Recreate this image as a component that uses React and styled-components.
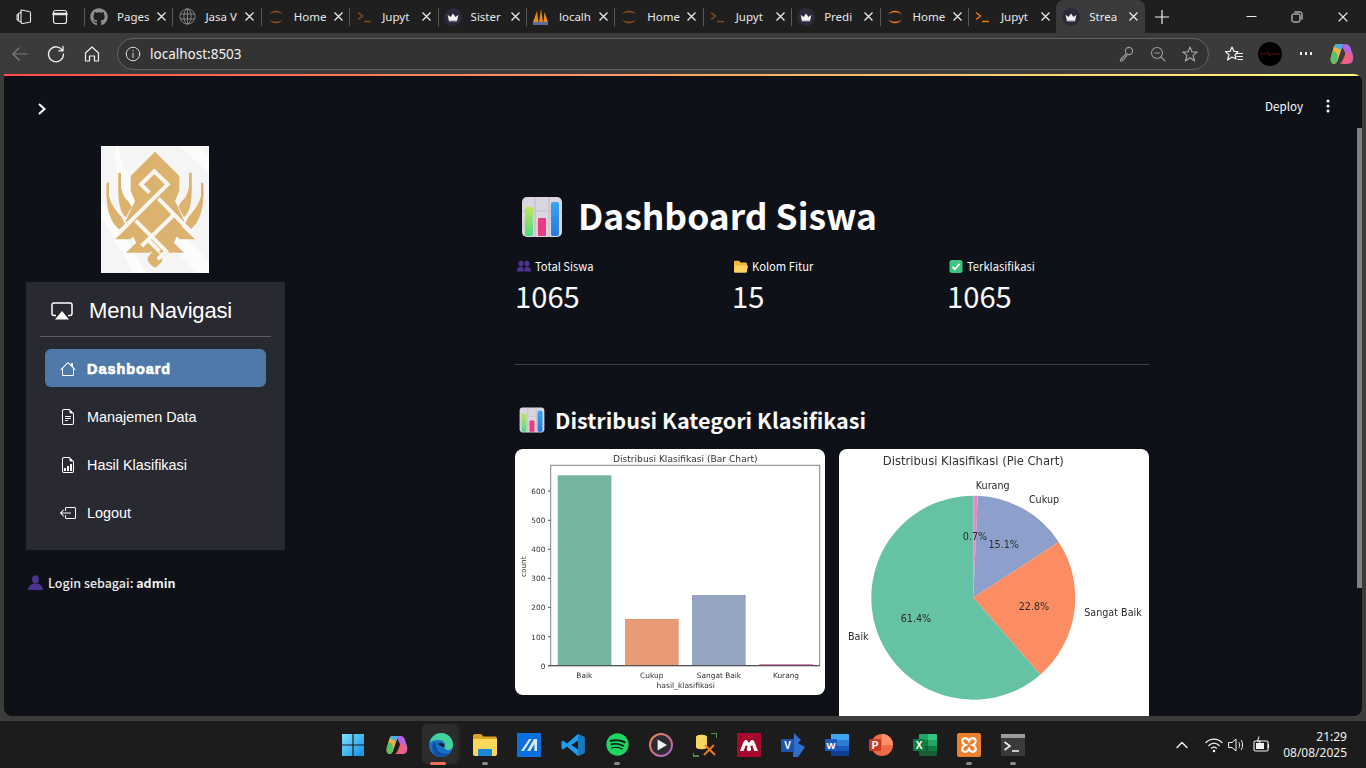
import React from 'react'
import styled, { createGlobalStyle } from 'styled-components'
import { BsHouse, BsFileEarmarkText, BsFileEarmarkBarGraph, BsBoxArrowLeft } from 'react-icons/bs'
import { FaGithub, FaSpotify } from 'react-icons/fa'

const GlobalStyle = createGlobalStyle`
    html, body {
        margin: 0;
        width: 1366px;
        height: 768px;
        overflow: hidden;
        background: #3b3b3b;
    }
    * { box-sizing: border-box; }
`

const uiFont = `"Noto Sans", "Open Sans", sans-serif`
const appFont = `"Noto Sans CJK SC", "Noto Sans", sans-serif`
const navFont = `"Liberation Sans", Arial, sans-serif`

const Window = styled.div`
    width: 1366px;
    height: 768px;
    display: flex;
    flex-direction: column;
    background: #3b3b3b;
    font-family: ${uiFont};
    color: #fff;
`

/* ---------- tab strip ---------- */
const TabStrip = styled.div`
    height: 33px;
    display: flex;
    align-items: stretch;
    background: #1f1f1f;
`
const StripIcons = styled.div`
    width: 84px;
    display: flex;
    align-items: center;
    gap: 18px;
    padding-left: 15px;
`
const Tab = styled.div`
    width: 88.4px;
    display: flex;
    align-items: center;
    padding-left: 6px;
    position: relative;
    font-size: 11.5px;
    color: #e8e8e8;
    background: ${p => p.$active ? '#3b3b3b' : 'none'};
    border-radius: ${p => p.$active ? '8px 8px 0 0' : '0'};
    &::before {
        content: '';
        display: ${p => p.$active ? 'none' : 'block'};
        position: absolute;
        left: 0;
        top: 8px;
        bottom: 7px;
        width: 1px;
        background: #5a5a5a;
    }
`
const Favicon = styled.div`
    width: 18px;
    height: 18px;
    display: flex;
    align-items: center;
    justify-content: center;
    flex: none;
`
const TabLabel = styled.div`
    width: 35px;
    margin-left: 9px;
    white-space: nowrap;
`
const TabClose = styled.div`
    margin-left: 4px;
    display: flex;
`
const NewTab = styled.div`
    width: 34px;
    display: flex;
    align-items: center;
    justify-content: center;
`
const WindowControls = styled.div`
    margin-left: auto;
    display: flex;
    align-items: center;
`
const WindowButton = styled.div`
    width: 46px;
    display: flex;
    justify-content: center;
`

/* ---------- address bar ---------- */
const Toolbar = styled.div`
    height: 41px;
    display: flex;
    align-items: flex-start;
    padding-top: 5px;
`
const NavButtons = styled.div`
    width: 117px;
    height: 32px;
    display: flex;
    align-items: center;
    gap: 16px;
    padding-left: 10px;
`
const AddressBar = styled.div`
    width: 1092px;
    height: 32px;
    display: flex;
    align-items: center;
    border: 1px solid #636363;
    border-radius: 16px;
    background: #333333;
    padding: 0 9px 0 7px;
`
const Url = styled.div`
    margin-left: 9px;
    font-size: 13.5px;
    color: #f2f2f2;
    flex: 1;
`
const AddressIcons = styled.div`
    display: flex;
    align-items: center;
    gap: 14px;
`
const ToolIcons = styled.div`
    flex: 1;
    height: 32px;
    display: flex;
    align-items: center;
    padding-left: 15px;
    gap: 14px;
`
const ProfileDot = styled.div`
    width: 24px;
    height: 24px;
    border-radius: 50%;
    background: #000;
    display: flex;
    align-items: center;
    justify-content: center;
`

/* ---------- streamlit page ---------- */
const Frame = styled.div`
    height: 642px;
    margin: 0 4px 5px;
    border-radius: 0 8px 8px 8px;
    background: #0e1117;
    overflow: hidden;
    position: relative;
    font-family: ${appFont};
`
const Decoration = styled.div`
    height: 2px;
    background: linear-gradient(90deg, #ff4b4b, #fffd80);
`
const TopBar = styled.div`
    height: 70px;
    display: flex;
    align-items: flex-start;
    padding: 22px 27px 0 32px;
`
const Chevron = styled.div`
    margin-top: 3px;
    display: flex;
`
const Deploy = styled.div`
    margin-left: auto;
    font-size: 11.6px;
    line-height: 16px;
    color: #fff;
`
const Kebab = styled.div`
    margin-left: 18px;
    display: flex;
`
const Scrollbar = styled.div`
    position: absolute;
    right: 0;
    top: 54px;
    width: 5px;
    height: 460px;
    background: #808080;
`
const Body = styled.div`
    display: flex;
    align-items: flex-start;
`
const SidePane = styled.div`
    width: 281px;
    padding-left: 22px;
    flex: none;
`
const LogoBox = styled.div`
    width: 108px;
    height: 127px;
    margin: 0 auto 9px 75px;
    display: flex;
`
const MenuCard = styled.div`
    width: 259px;
    height: 268px;
    background: #292932;
    padding: 0 14px;
`
const MenuHead = styled.div`
    height: 55px;
    display: flex;
    align-items: center;
    padding: 4px 0 0 11px;
    gap: 16px;
    border-bottom: 1px solid #5d5d66;
    font-family: ${navFont};
    font-size: 22px;
    letter-spacing: -0.2px;
    color: #fff;
`
const MenuList = styled.div`
    display: flex;
    flex-direction: column;
    gap: 10px;
    padding: 12px 5px 0;
`
const MenuItem = styled.div`
    height: 38px;
    display: flex;
    align-items: center;
    gap: 11px;
    padding: 2px 0 0 15px;
    border-radius: 6px;
    font-family: ${navFont};
    font-size: 14.4px;
    color: #fff;
    background: ${p => p.$active ? '#4f79a8' : 'none'};
    font-weight: ${p => p.$active ? 700 : 400};
    -webkit-text-stroke: ${p => p.$active ? '0.7px #fff' : '0'};
    letter-spacing: ${p => p.$active ? '1px' : '0'};
`
const LoginLine = styled.div`
    margin: 23px 0 0 2px;
    display: flex;
    align-items: center;
    gap: 5px;
    height: 18px;
    font-size: 12.5px;
    font-weight: 500;
    color: #e9e9ea;
    white-space: pre;
    b { font-weight: 700; color: #f3f3f3; }
`
const Main = styled.div`
    width: 634px;
    margin-left: 230px;
    flex: none;
`
const TitleRow = styled.div`
    height: 42px;
    margin-top: 50px;
    display: flex;
    align-items: center;
    gap: 15px;
    padding-left: 6px;
`
const Title = styled.h1`
    margin: 0;
    padding-bottom: 4px;
    font-size: 35.4px;
    line-height: 42px;
    font-weight: 700;
    color: #fff;
`
const Metrics = styled.div`
    display: grid;
    grid-template-columns: 217px 215px 200px;
    margin-top: 18px;
`
const MetricLabel = styled.div`
    height: 20px;
    display: flex;
    align-items: center;
    gap: 4px;
    padding-left: 2px;
    font-size: 11.2px;
    color: #fafafa;
`
const MetricValue = styled.div`
    font-size: 29.2px;
    line-height: 38px;
    color: #fafafa;
`
const Divider = styled.div`
    height: 1px;
    margin-top: 50px;
    background: #3b3e46;
`
const SectionRow = styled.div`
    height: 30px;
    margin: 40px 0 14px;
    display: flex;
    align-items: center;
    gap: 10px;
    padding-left: 4px;
`
const SectionTitle = styled.h2`
    margin: 0;
    font-size: 21.6px;
    line-height: 30px;
    font-weight: 700;
    color: #fafafa;
`
const Charts = styled.div`
    display: flex;
    align-items: flex-start;
    gap: 14px;
`
const ChartCard = styled.div`
    width: 310px;
    height: ${p => p.$h}px;
    border-radius: 8px;
    background: #fff;
    overflow: hidden;
    svg {
        display: block;
        font-family: "DejaVu Sans", sans-serif;
        filter: blur(0.35px);
    }
`

/* ---------- taskbar ---------- */
const Taskbar = styled.div`
    height: 47px;
    display: grid;
    grid-template-columns: 1fr auto 1fr;
    background: #1c1c1c;
`
const TaskIcons = styled.div`
    grid-column: 2;
    display: flex;
`
const TaskSlot = styled.div`
    width: 44px;
    height: 47px;
    display: flex;
    align-items: center;
    justify-content: center;
    position: relative;
    &::before {
        content: '';
        display: ${p => p.$active ? 'block' : 'none'};
        position: absolute;
        left: 3px;
        top: 3px;
        width: 35px;
        height: 40px;
        border-radius: 5px;
        background: #2c2c2c;
        box-shadow: 3px 0 0 #262626;
    }
    &::after {
        content: '';
        display: ${p => p.$mark ? 'block' : 'none'};
        position: absolute;
        left: 50%;
        bottom: 3px;
        width: ${p => p.$active ? '16px' : '6px'};
        height: 3px;
        margin-left: ${p => p.$active ? '-11px' : '-3px'};
        border-radius: 2px;
        background: ${p => p.$active ? '#f0705a' : '#8a8a8a'};
    }
    svg { position: relative; z-index: 1; }
`
const Tray = styled.div`
    grid-column: 3;
    display: flex;
    align-items: center;
    justify-content: flex-end;
    gap: 3px;
    padding-right: 19px;
`
const TrayIcon = styled.div`
    display: flex;
    margin-left: ${p => p.$ml || 0}px;
`
const Clock = styled.div`
    margin-left: 9px;
    text-align: right;
    font-size: 12px;
    line-height: 16px;
    color: #f0f0f0;
`

/* ---------- drawings ---------- */
const ChartEmoji = ({ size, id }) => (
    <svg width={size} height={size} viewBox="0 0 42 42">
        <defs>
            <linearGradient id={id + 'g'} x1="0" y1="0" x2="0" y2="1">
                <stop offset="0" stopColor="#bfe65a" /><stop offset="1" stopColor="#4fd98a" />
            </linearGradient>
            <linearGradient id={id + 'b'} x1="0" y1="0" x2="0" y2="1">
                <stop offset="0" stopColor="#35a5f2" /><stop offset="1" stopColor="#2a78d8" />
            </linearGradient>
        </defs>
        <rect x="1" y="1" width="40" height="40" rx="5" fill="#d9d6df" />
        <path d="M1 15H41M1 28H41M14 1V41M28 1V41" stroke="#c3c0cb" strokeWidth="1.2" />
        <rect x="4" y="11" width="8" height="29" rx="2" fill={`url(#${id}g)`} />
        <rect x="17" y="22" width="8" height="18" rx="1" fill="#e93a82" />
        <rect x="30" y="6" width="8" height="34" rx="2" fill={`url(#${id}b)`} />
    </svg>
)

const PeopleEmoji = () => (
    <svg width="14" height="12" viewBox="0 0 14 12">
        <circle cx="4" cy="3.4" r="2.6" fill="#4d3390" />
        <circle cx="10" cy="3.4" r="2.6" fill="#4d3390" />
        <path d="M0 11.5C0 8 1.8 6.6 4 6.6S6.8 8 6.8 11.5ZM7.2 11.5C7.2 8 8 6.6 10 6.6S14 8 14 11.5Z" fill="#4d3390" />
    </svg>
)
const FolderEmoji = () => (
    <svg width="14" height="13" viewBox="0 0 14 13">
        <path d="M0 2.2C0 1.3.6.8 1.4.8H5L6.6 2.4H11.6C12.4 2.4 13 3 13 3.8V11.4C13 12 12.5 12.4 12 12.4H1.2C.5 12.4 0 11.9 0 11.2Z" fill="#f3b83e" />
        <path d="M1.8 5.4H13.2C13.8 5.4 14 5.8 13.9 6.3L12.8 11.6C12.7 12.1 12.4 12.4 11.9 12.4H1C.4 12.4 0 12 0 11.4L1 6C1.1 5.6 1.4 5.4 1.8 5.4Z" fill="#fdd365" />
    </svg>
)
const CheckEmoji = () => (
    <svg width="14" height="13" viewBox="0 0 13 13">
        <rect width="13" height="13" rx="2.5" fill="#3fc680" />
        <path d="M3 6.8L5.5 9.3 10 3.9" fill="none" stroke="#fff" strokeWidth="1.7" />
    </svg>
)
const UserEmoji = () => (
    <svg width="15" height="15" viewBox="0 0 15 15">
        <ellipse cx="7.5" cy="4.4" rx="3.4" ry="4.2" fill="#4d3390" />
        <path d="M0 15C.4 10.8 3 9.6 5 8.8H10C12 9.6 14.6 10.8 15 15Z" fill="#4d3390" />
    </svg>
)

const AirplayIcon = () => (
    <svg width="22" height="18" viewBox="0 0 22 18">
        <path d="M5 13.5H3C1.8 13.5 1 12.7 1 11.5V3C1 1.8 1.8 1 3 1H19C20.2 1 21 1.8 21 3V11.5C21 12.7 20.2 13.5 19 13.5H17" fill="none" stroke="#fff" strokeWidth="1.5" />
        <path d="M11 9L18 17.5H4Z" fill="#fff" />
    </svg>
)

// one half of the emblem, mirrored for the other side
const LogoHalf = () => (
    <g fill="#dcb26f">
        <path d="M52 80L60 80V122C64 145 72 158 82 166L92 182L75 214C55 195 50 170 52 80Z" />
        <path d="M17 110L24 110V150C30 175 42 190 62 214L72 234L58 252C30 232 12 190 17 110Z" />
        <path d="M42 280L92 232L112 254L88 280Z" />
        <path d="M75 320L124 272L158 306L146 320Z" />
    </g>
)

const Logo = () => (
    <svg width="108" height="127" viewBox="0 0 324 381">
        <rect width="324" height="381" fill="#f5f5f5" />
        <path d="M52 0C62 62 82 102 137 152L324 347V381H287L97 182C57 142 42 72 42 0Z" fill="#fcfcfc" />
        <path d="M237 0L324 82V32L287 0ZM0 212L97 381H137L0 162Z" fill="#fcfcfc" />
        <path d="M162 17L235 90V135L222 165L250 225L205 318H119L74 225L102 165L89 135V90Z" fill="#dcb26f" />
        <LogoHalf />
        <g transform="translate(324 0) scale(-1 1)"><LogoHalf /></g>
        <path d="M162 365C148 356 138 348 140 335C146 325 155 318 162 305C169 318 178 325 184 335C186 348 176 356 162 365Z" fill="#dcb26f" />
        <g fill="none" stroke="#f8f6f1" strokeWidth="12">
            <path d="M145 140L120 115L160 76L200 115L50 264" />
            <path d="M172 157L276 264" />
            <path d="M218 207L122 300" />
            <path d="M104 224L196 316L170 340" />
            <path d="M142 282L176 316" />
        </g>
    </svg>
)

const TabX = ({ size = 11 }) => (
    <svg width={size} height={size} viewBox="0 0 11 11">
        <path d="M1.5 1.5L9.5 9.5M9.5 1.5L1.5 9.5" stroke="#eee" strokeWidth="1.2" />
    </svg>
)
const RingIcon = ({ dim }) => (
    <svg width="16" height="18" viewBox="0 0 16 18" opacity={dim ? 0.55 : 1}>
        <path d="M1.5 6.5C3 1.5 13 1.5 14.5 6.5C12 3.5 4 3.5 1.5 6.5ZM1.5 11.5C3 16.5 13 16.5 14.5 11.5C12 14.5 4 14.5 1.5 11.5Z" fill="#f37726" />
    </svg>
)
const PromptIcon = ({ dim }) => (
    <svg width="15" height="12" viewBox="0 0 15 12" opacity={dim ? 0.5 : 1}>
        <path d="M1 1.5L5.5 5L1 8.5" fill="none" stroke="#f57c00" strokeWidth="1.4" />
        <path d="M7 10.5H14" stroke="#f57c00" strokeWidth="1.4" />
    </svg>
)
const CrownIcon = () => (
    <svg width="18" height="18" viewBox="0 0 18 18">
        <circle cx="9" cy="9" r="9" fill="#2a2a3c" />
        <path d="M3.6 6.8L6.5 9 9 5.4 11.5 9 14.4 6.8 13.2 12.2H4.8Z" fill="#f2f2f2" />
        <path d="M4.8 12.8H13.2" stroke="#f2f2f2" />
    </svg>
)
const GlobeIcon = () => (
    <svg width="17" height="17" viewBox="0 0 17 17" fill="none" stroke="#8c8c8c" strokeWidth="0.9">
        <circle cx="8.5" cy="8.5" r="7.6" />
        <ellipse cx="8.5" cy="8.5" rx="3.6" ry="7.6" />
        <path d="M8.5 1V16M1.4 6H15.6M1.4 11H15.6" />
    </svg>
)
const SailIcon = () => (
    <svg width="17" height="18" viewBox="0 0 17 18">
        <path d="M1 14L5 3 6.5 14ZM7 14L9 1 11 14ZM11.5 14L12.5 4 16 14Z" fill="#e58a1f" />
        <rect x="1" y="14" width="15" height="3" fill="#5b6d9a" />
    </svg>
)

const TABS = [
    { label: 'Pages', icon: <FaGithub size={18} color="#8f8f8f" /> },
    { label: 'Jasa V', icon: <GlobeIcon /> },
    { label: 'Home', icon: <RingIcon dim /> },
    { label: 'Jupyt', icon: <PromptIcon dim /> },
    { label: 'Sister', icon: <CrownIcon /> },
    { label: 'localh', icon: <SailIcon /> },
    { label: 'Home', icon: <RingIcon dim /> },
    { label: 'Jupyt', icon: <PromptIcon dim /> },
    { label: 'Predi', icon: <CrownIcon /> },
    { label: 'Home', icon: <RingIcon /> },
    { label: 'Jupyt', icon: <PromptIcon /> },
    { label: 'Strea', icon: <CrownIcon />, active: true },
]

const StrokeIcon = ({ w = 18, h = 18, box, color = '#e6e6e6', sw = 1.3, children }) => (
    <svg width={w} height={h} viewBox={box || `0 0 ${w} ${h}`} fill="none" stroke={color} strokeWidth={sw} strokeLinecap="round" strokeLinejoin="round">
        {children}
    </svg>
)

/* ---------- charts ---------- */
function BarChart() {
    const bars = [
        { x: 42.7, top: 26.3, fill: '#75b4a0', label: 'Baik', lx: 69.3 },
        { x: 110, top: 170, fill: '#e89a75', label: 'Cukup', lx: 136.7 },
        { x: 177, top: 146, fill: '#96a4c3', label: 'Sangat Baik', lx: 204 },
        { x: 244.3, top: 215, fill: '#d985b8', label: 'Kurang', lx: 271 },
    ]
    const ticks = [[0, 216.7], [100, 187.7], [200, 158.3], [300, 129.3], [400, 100.3], [500, 71.3], [600, 42]]
    return (
        <svg width="310" height="246" viewBox="0 0 310 246">
            <text x="170.3" y="10" fontSize="9.15" fill="#333" textAnchor="middle" dominantBaseline="middle">Distribusi Klasifikasi (Bar Chart)</text>
            <rect x="35.7" y="16.3" width="269" height="200.4" fill="none" stroke="#808080" />
            {bars.map(b => (
                <g key={b.label}>
                    <rect x={b.x} y={b.top} width="53.7" height={216.7 - b.top} fill={b.fill} />
                    <text x={b.lx} y="226.5" fontSize="7.4" fill="#333" textAnchor="middle" dominantBaseline="middle">{b.label}</text>
                </g>
            ))}
            <path d="M33 216.7H304.7" stroke="#444" />
            {ticks.map(([v, y]) => (
                <g key={v}>
                    <path d={`M33 ${y}H35.7`} stroke="#555" />
                    <text x="30.3" y={y + 1} fontSize="7.3" fill="#333" textAnchor="end" dominantBaseline="middle">{v}</text>
                </g>
            ))}
            <text x="170.7" y="237" fontSize="7.6" fill="#333" textAnchor="middle" dominantBaseline="middle">hasil_klasifikasi</text>
            <text x="9.3" y="117.7" fontSize="7.3" fill="#333" textAnchor="middle" dominantBaseline="middle" transform="rotate(-90 9.3 117.7)">count</text>
        </svg>
    )
}

const PIE = [
    { pct: 0.7, fill: '#e78ac3' },
    { pct: 15.1, fill: '#8da0cb' },
    { pct: 22.8, fill: '#fc8d62' },
    { pct: 61.4, fill: '#66c2a5' },
]
const PIE_TEXT = [
    { t: 'Kurang', x: 153.7, y: 37 },
    { t: 'Cukup', x: 205, y: 51 },
    { t: 'Sangat Baik', x: 274, y: 164 },
    { t: 'Baik', x: 19.3, y: 188 },
    { t: '61.4%', x: 77, y: 170.3 },
    { t: '22.8%', x: 195, y: 158 },
    { t: '15.1%', x: 164.7, y: 96 },
    { t: '0.7%', x: 136, y: 87.7 },
]

function PieChart() {
    const cx = 134.3, cy = 148.7, r = 102
    let acc = 0
    const slices = PIE.map(s => {
        const a0 = acc / 100 * 2 * Math.PI
        acc += s.pct
        const a1 = acc / 100 * 2 * Math.PI
        const large = s.pct > 50 ? 1 : 0
        const p = (a) => `${cx + r * Math.sin(a)} ${cy - r * Math.cos(a)}`
        return { d: `M${cx} ${cy}L${p(a0)}A${r} ${r} 0 ${large} 1 ${p(a1)}Z`, fill: s.fill }
    })
    return (
        <svg width="310" height="300" viewBox="0 0 310 300">
            <text x="134.3" y="12.7" fontSize="11.6" fill="#333" textAnchor="middle" dominantBaseline="middle">Distribusi Klasifikasi (Pie Chart)</text>
            {slices.map(s => <path key={s.fill} d={s.d} fill={s.fill} />)}
            {PIE_TEXT.map(l => (
                <text key={l.t} x={l.x} y={l.y} fontSize="9.6" fill="#2b2b2b" textAnchor="middle" dominantBaseline="middle">{l.t}</text>
            ))}
        </svg>
    )
}

/* ---------- taskbar icons ---------- */
const CopilotMark = ({ size }) => (
    <svg width={size} height={size} viewBox="0 0 22 22">
        <path d="M6 2H12L8 14C7 18 6 20 3 20C1 19 0 17 1 13L3 6C3.6 3.4 4.5 2 6 2Z" fill="#f5b13d" />
        <path d="M3 20C1 19 0 17 1 13L3 8C6 9 7 11 7 15C7 18 5 20 3 20Z" fill="#55c36b" />
        <path d="M10 2H15C17 2 18 3 19 6L21 12C22 16 21 20 17 20H12L10 20C13 19 14 15 15 12Z" fill="#b365e6" />
        <path d="M8 20H16C18 20 20 18 21 15C20 12 17 9 15 8L12 16C11 18 10 20 8 20Z" fill="#f0607a" />
        <path d="M6 2H12L10 7C8 6 6 5 4 5C4.5 3 5 2 6 2Z" fill="#3fb4ea" />
    </svg>
)

const TASK_ICONS = [
    { key: 'start', icon: (
        <svg width="24" height="24" viewBox="0 0 24 24">
            <defs><linearGradient id="win" x1="0" y1="0" x2="1" y2="1"><stop offset="0" stopColor="#7ee0fb" /><stop offset="1" stopColor="#0f8fe8" /></linearGradient></defs>
            <path d="M1 1H11.4V11.4H1ZM12.6 1H23V11.4H12.6ZM1 12.6H11.4V23H1ZM12.6 12.6H23V23H12.6Z" fill="url(#win)" />
        </svg>
    ) },
    { key: 'copilot', icon: <CopilotMark size={22} /> },
    { key: 'edge', active: true, mark: true, icon: (
        <svg width="24" height="24" viewBox="0 0 24 24">
            <circle cx="12" cy="12" r="12" fill="#1a6fc4" />
            <path d="M0.5 10C2 3 8 0 12 0C19 0 24 5 24 12C24 15 22 17 19 17C16 17 15 15 16 13C17 10 14 7 10 7C5 7 2 8 .5 10Z" fill="#42d29a" />
            <path d="M7 12C7 17 11 21 17 21C19 21 20 20.6 21 20C18 24 13 24.6 9 23C4 21 2 15 4 11C5 9 7 9 7 12Z" fill="#0f4fa0" />
            <path d="M9 11C11 9 15 10 15.5 13C14 15 12 13 9 11Z" fill="#1c1c1c" />
        </svg>
    ) },
    { key: 'files', mark: true, icon: (
        <svg width="24" height="22" viewBox="0 0 24 22">
            <path d="M0 2C0 1 .7 0 2 0H8L10.5 2.5H22C23.2 2.5 24 3.2 24 4.5V6H0Z" fill="#d9a520" />
            <path d="M0 5H24V20C24 21 23.2 22 22 22H2C.8 22 0 21 0 20Z" fill="#fbd75b" />
            <path d="M6 15H18C18.6 15 19 15.4 19 16V22H5V16C5 15.4 5.4 15 6 15Z" fill="#1a86d8" />
        </svg>
    ) },
    { key: 'ma', icon: (
        <svg width="24" height="24" viewBox="0 0 24 24">
            <rect width="24" height="24" fill="#0b6fe0" />
            <path d="M4 18L12 6H14.6L6.8 18ZM10 18L17 6H20V18H17.4V11L13.2 18Z" fill="#d8e9fb" />
        </svg>
    ) },
    { key: 'vscode', icon: (
        <svg width="24" height="24" viewBox="0 0 24 24">
            <path d="M17 1L23.5 4V20L17 23L6 13.4L2 16.6L.5 15.6V8.4L2 7.4L6 10.6ZM17 7.4L10.4 12L17 16.6Z" fill="#1f9cf0" />
            <path d="M17 1L23.5 4V20L17 23Z" fill="#1778c2" />
        </svg>
    ) },
    { key: 'spotify', mark: true, icon: <FaSpotify size={23} color="#1ed760" /> },
    { key: 'play', icon: (
        <svg width="24" height="24" viewBox="0 0 24 24">
            <defs><linearGradient id="pl" x1="0" y1="0" x2="1" y2="1"><stop offset="0" stopColor="#f08a4b" /><stop offset="1" stopColor="#a55ccf" /></linearGradient></defs>
            <circle cx="12" cy="12" r="11" fill="#2b2b30" stroke="url(#pl)" strokeWidth="2" />
            <path d="M8.6 6.5L18 12L8.6 17.5Z" fill="#f2f2f2" />
        </svg>
    ) },
    { key: 'db', icon: (
        <svg width="24" height="24" viewBox="0 0 24 24">
            <path d="M3 4C3 1 14 1 14 4V14C14 17 3 17 3 14Z" fill="#f6d860" />
            <path d="M0 20V23H6" fill="none" stroke="#5fae4e" strokeWidth="1.6" />
            <path d="M22 0H24V5M18 0H22" fill="none" stroke="#5fae4e" strokeWidth="1.6" />
            <path d="M11 22L21 12M12 12L22 22" stroke="#ea7a1f" strokeWidth="2" />
        </svg>
    ) },
    { key: 'mendeley', icon: (
        <svg width="24" height="24" viewBox="0 0 24 24">
            <rect width="24" height="24" fill="#a6082c" />
            <path d="M3 18C5 14 6 8 8.5 7C10.5 6.5 11 9 12 10C13 9 13.5 6.5 15.5 7C18 8 19 14 21 18H17.5C16.5 16 15.5 13 15 12C14 13.5 13 14 12 14C11 14 10 13.5 9 12C8.5 13 7.5 16 6.5 18Z" fill="#fff" />
            <circle cx="12" cy="16" r="2.2" fill="#fff" />
        </svg>
    ) },
    { key: 'visio', icon: (
        <svg width="24" height="24" viewBox="0 0 24 24">
            <path d="M13 0L20 7L17 10L24 14L17 24H12Z" fill="#2f6fd0" />
            <rect x="0" y="6" width="13" height="13" rx="1" fill="#1f55a8" />
            <text x="6.5" y="16" fontSize="10" fontWeight="700" fill="#fff" textAnchor="middle" fontFamily="Liberation Sans">V</text>
        </svg>
    ) },
    { key: 'word', icon: (
        <svg width="24" height="24" viewBox="0 0 24 24">
            <path d="M6 1H23C23.6 1 24 1.4 24 2V7H6Z" fill="#41a5ee" />
            <path d="M6 7H24V13H6Z" fill="#2b7cd3" /><path d="M6 13H24V18H6Z" fill="#185abd" />
            <path d="M6 18H24V22C24 22.6 23.6 23 23 23H7C6.4 23 6 22.6 6 22Z" fill="#103f91" />
            <rect x="0" y="6" width="12" height="12" rx="1" fill="#1a5cbc" />
            <text x="6" y="15.5" fontSize="9.5" fontWeight="700" fill="#fff" textAnchor="middle" fontFamily="Liberation Sans">W</text>
        </svg>
    ) },
    { key: 'ppt', icon: (
        <svg width="24" height="24" viewBox="0 0 24 24">
            <circle cx="13" cy="12" r="11" fill="#ed6c47" />
            <path d="M13 1A11 11 0 0 1 24 12H13Z" fill="#ff8f6b" />
            <rect x="0" y="6" width="12" height="12" rx="1" fill="#c43e1c" />
            <text x="6" y="15.5" fontSize="10" fontWeight="700" fill="#fff" textAnchor="middle" fontFamily="Liberation Sans">P</text>
        </svg>
    ) },
    { key: 'excel', icon: (
        <svg width="24" height="24" viewBox="0 0 24 24">
            <path d="M6 1H15V7H6Z" fill="#21a366" /><path d="M15 1H23C23.6 1 24 1.4 24 2V7H15Z" fill="#33c481" />
            <path d="M6 7H15V13H6Z" fill="#107c41" /><path d="M15 7H24V13H15Z" fill="#21a366" />
            <path d="M6 13H15V18H6Z" fill="#185c37" /><path d="M15 13H24V18H15Z" fill="#107c41" />
            <path d="M6 18H24V22C24 22.6 23.6 23 23 23H7C6.4 23 6 22.6 6 22Z" fill="#185c37" />
            <rect x="0" y="6" width="12" height="12" rx="1" fill="#107c41" />
            <text x="6" y="15.5" fontSize="10" fontWeight="700" fill="#fff" textAnchor="middle" fontFamily="Liberation Sans">X</text>
        </svg>
    ) },
    { key: 'xampp', mark: true, icon: (
        <svg width="24" height="24" viewBox="0 0 24 24">
            <rect width="24" height="24" rx="2" fill="#ee7f2d" />
            <path d="M6 6C9 4 11 6 12 8C13 6 15 4 18 6C20 8 18 11 15.5 12C18 13 20 16 18 18C15 20 13 18 12 16C11 18 9 20 6 18C4 16 6 13 8.5 12C6 11 4 8 6 6Z" fill="none" stroke="#fff" strokeWidth="2.2" />
        </svg>
    ) },
    { key: 'terminal', mark: true, icon: (
        <svg width="24" height="22" viewBox="0 0 24 22">
            <rect width="24" height="22" rx="1" fill="#3a3a3a" />
            <rect width="24" height="4" fill="#9a9a9a" />
            <path d="M3.5 8L9 12L3.5 16" fill="none" stroke="#eee" strokeWidth="1.6" />
            <path d="M11 17H18" stroke="#eee" strokeWidth="1.6" />
        </svg>
    ) },
]

export default function App() {
    return (
        <Window>
            <GlobalStyle />
            <TabStrip>
                <StripIcons>
                    <StrokeIcon box="0 0 18 18" sw={1.1}>
                        <path d="M6 2L14 3.5C15 3.7 15.5 4.3 15.5 5V14L8 15.5C7 15.7 6 15 6 14Z" />
                        <path d="M6 4.5L3.5 5.5V13L6 14M3.5 6L2 7V11.5L3.5 12.5" />
                    </StrokeIcon>
                    <StrokeIcon box="0 0 18 18" sw={1.2}>
                        <rect x="2.5" y="2.5" width="13" height="13" rx="2" />
                        <path d="M2.5 6H15.5" strokeWidth="2.6" />
                    </StrokeIcon>
                </StripIcons>
                {TABS.map((t, i) => (
                    <Tab key={i} $active={t.active}>
                        <Favicon>{t.icon}</Favicon>
                        <TabLabel>{t.label}</TabLabel>
                        <TabClose><TabX /></TabClose>
                    </Tab>
                ))}
                <NewTab>
                    <svg width="14" height="14" viewBox="0 0 14 14"><path d="M7 0V14M0 7H14" stroke="#eee" strokeWidth="1.2" /></svg>
                </NewTab>
                <WindowControls>
                    <WindowButton><svg width="11" height="11" viewBox="0 0 11 11"><path d="M0.5 5.5H10.5" stroke="#eee" /></svg></WindowButton>
                    <WindowButton>
                        <svg width="12" height="12" viewBox="0 0 12 12" fill="none" stroke="#eee">
                            <rect x="1" y="3" width="8" height="8" rx="1.4" /><path d="M3.5 1H9.5C10.4 1 11 1.6 11 2.5V8.5" />
                        </svg>
                    </WindowButton>
                    <WindowButton><TabX size={12} /></WindowButton>
                </WindowControls>
            </TabStrip>

            <Toolbar>
                <NavButtons>
                    <StrokeIcon w={20} h={20} color="#7f7f7f" sw={1.2}><path d="M17 10H3M9 4L3 10L9 16" /></StrokeIcon>
                    <StrokeIcon w={20} h={20} color="#f0f0f0" sw={1.3}><path d="M16.5 6.5A7.5 7.5 0 1 0 17.5 10M17 2.5V6.8H12.7" /></StrokeIcon>
                    <StrokeIcon w={20} h={20} color="#f0f0f0" sw={1.2}><path d="M3.5 9L10 3L16.5 9V17H12.5V12H7.5V17H3.5Z" /></StrokeIcon>
                </NavButtons>
                <AddressBar>
                    <StrokeIcon w={16} h={16} color="#dcdcdc" sw={1}>
                        <circle cx="8" cy="8" r="6.8" /><path d="M8 7.2V11.5M8 4.5V5" />
                    </StrokeIcon>
                    <Url>localhost:8503</Url>
                    <AddressIcons>
                        <StrokeIcon color="#9a9a9a" sw={1.1}><circle cx="12" cy="6" r="3.6" /><path d="M9.5 8.5L3.5 14.5V16H5.5L6 14H7.5L8 12.5L10 10.5" /></StrokeIcon>
                        <StrokeIcon color="#9a9a9a" sw={1.1}><circle cx="8" cy="8" r="5.5" /><path d="M5.5 8H10.5M12 12L16 16" /></StrokeIcon>
                        <StrokeIcon color="#a8a8a8" sw={1.1}><path d="M9 2L11 7H16.2L12 10.4L13.6 16L9 12.8L4.4 16L6 10.4L1.8 7H7Z" /></StrokeIcon>
                    </AddressIcons>
                </AddressBar>
                <ToolIcons>
                    <StrokeIcon w={20} h={20} color="#f0f0f0" sw={1.2}><path d="M8 3L10 7.5H14L11 11L12 15L8 13L3.5 16L5 10.8L1.5 7.5H6ZM13 9.5H18.5M13 12.5H18.5M14 15.5H18.5" /></StrokeIcon>
                    <ProfileDot>
                        <svg width="20" height="6" viewBox="0 0 20 6"><path d="M0 3H7L8 1 9.5 5 10.5 3H20" fill="none" stroke="#6a1010" strokeWidth="0.8" /></svg>
                    </ProfileDot>
                    <svg width="20" height="4" viewBox="0 0 20 4"><path d="M4 0h2v3H4zM9 0h2v3H9zM14 0h2v3h-2z" fill="#eee" /></svg>
                    <CopilotMark size={24} />
                </ToolIcons>
            </Toolbar>

            <Frame>
                <Decoration />
                <TopBar>
                    <Chevron>
                        <svg width="12" height="16" viewBox="0 0 12 16"><path d="M3 3L8.5 8L3 13" fill="none" stroke="#fff" strokeWidth="2" /></svg>
                    </Chevron>
                    <Deploy>Deploy</Deploy>
                    <Kebab>
                        <svg width="14" height="16" viewBox="0 0 14 16"><circle cx="7" cy="3" r="1.5" fill="#fff" /><circle cx="7" cy="8" r="1.5" fill="#fff" /><circle cx="7" cy="13" r="1.5" fill="#fff" /></svg>
                    </Kebab>
                </TopBar>
                <Scrollbar />
                <Body>
                    <SidePane>
                        <LogoBox><Logo /></LogoBox>
                        <MenuCard>
                            <MenuHead><AirplayIcon />Menu Navigasi</MenuHead>
                            <MenuList>
                                <MenuItem $active><BsHouse size={16} />Dashboard</MenuItem>
                                <MenuItem><BsFileEarmarkText size={16} />Manajemen Data</MenuItem>
                                <MenuItem><BsFileEarmarkBarGraph size={16} />Hasil Klasifikasi</MenuItem>
                                <MenuItem><BsBoxArrowLeft size={16} />Logout</MenuItem>
                            </MenuList>
                        </MenuCard>
                        <LoginLine><UserEmoji /><span>Login sebagai: <b>admin</b></span></LoginLine>
                    </SidePane>
                    <Main>
                        <TitleRow>
                            <ChartEmoji size={42} id="big" />
                            <Title>Dashboard Siswa</Title>
                        </TitleRow>
                        <Metrics>
                            <div>
                                <MetricLabel><PeopleEmoji />Total Siswa</MetricLabel>
                                <MetricValue>1065</MetricValue>
                            </div>
                            <div>
                                <MetricLabel><FolderEmoji />Kolom Fitur</MetricLabel>
                                <MetricValue>15</MetricValue>
                            </div>
                            <div>
                                <MetricLabel><CheckEmoji />Terklasifikasi</MetricLabel>
                                <MetricValue>1065</MetricValue>
                            </div>
                        </Metrics>
                        <Divider />
                        <SectionRow>
                            <ChartEmoji size={26} id="small" />
                            <SectionTitle>Distribusi Kategori Klasifikasi</SectionTitle>
                        </SectionRow>
                        <Charts>
                            <ChartCard $h={246}><BarChart /></ChartCard>
                            <ChartCard $h={300}><PieChart /></ChartCard>
                        </Charts>
                    </Main>
                </Body>
            </Frame>

            <Taskbar>
                <TaskIcons>
                    {TASK_ICONS.map(t => (
                        <TaskSlot key={t.key} $active={t.active} $mark={t.mark}>{t.icon}</TaskSlot>
                    ))}
                </TaskIcons>
                <Tray>
                    <TrayIcon>
                        <StrokeIcon w={14} h={14} color="#f0f0f0" sw={1.5}><path d="M2 9.5L7 4.5L12 9.5" /></StrokeIcon>
                    </TrayIcon>
                    <TrayIcon $ml={12}>
                        <StrokeIcon w={20} h={18} box="0 0 20 18" color="#f0f0f0" sw={1.2}><path d="M2 6.5C6.5 2 13.5 2 18 6.5M4.8 9.5C8 6.5 12 6.5 15.2 9.5M7.5 12.2C9 11 11 11 12.5 12.2" /><circle cx="10" cy="15" r="0.7" fill="#f0f0f0" /></StrokeIcon>
                    </TrayIcon>
                    <TrayIcon>
                        <StrokeIcon w={20} h={18} box="0 0 20 18" color="#f0f0f0" sw={1}><path d="M2 6.5H5L9 3V15L5 11.5H2ZM12 6.5C13 8 13 10 12 11.5M14.5 4.5C16 7 16 11 14.5 13.5" /></StrokeIcon>
                    </TrayIcon>
                    <TrayIcon $ml={3}>
                        <svg width="18" height="18" viewBox="0 0 18 18" fill="none" stroke="#f0f0f0" strokeWidth="1.1">
                            <rect x="1" y="5" width="14" height="10" rx="1.5" /><path d="M15.5 8V12" /><rect x="3" y="7" width="8" height="6" fill="#f0f0f0" stroke="none" /><path d="M6 0.5L4.5 5H7.5L6 8" strokeWidth="1" />
                        </svg>
                    </TrayIcon>
                    <Clock>21:29<br />08/08/2025</Clock>
                </Tray>
            </Taskbar>
        </Window>
    )
}
